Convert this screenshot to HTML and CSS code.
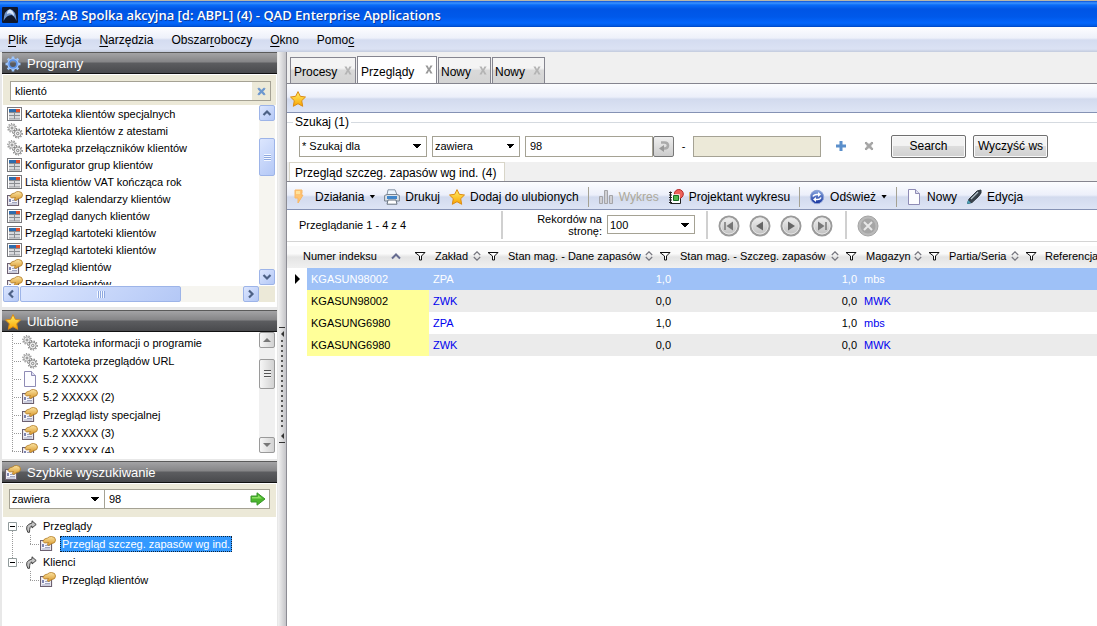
FILE: index.html
```html
<!DOCTYPE html>
<html lang="pl">
<head>
<meta charset="utf-8">
<title>mfg3: AB Spolka akcyjna - QAD Enterprise Applications</title>
<link rel="stylesheet" href="styles.css">
</head>
<body>
<svg class="sprite" aria-hidden="true">
  <defs>
    <linearGradient id="gold" x1="0" y1="0" x2="0" y2="1"><stop offset="0" stop-color="#fff06a"/><stop offset="1" stop-color="#f9a400"/></linearGradient>
    <linearGradient id="brass" x1="0" y1="0" x2="0" y2="1"><stop offset="0" stop-color="#fbe3a0"/><stop offset="1" stop-color="#d8962a"/></linearGradient>
    <linearGradient id="ball" x1="0" y1="0" x2="0" y2="1"><stop offset="0" stop-color="#f2f2f2"/><stop offset="1" stop-color="#bdbdbd"/></linearGradient>
    <linearGradient id="blueball" x1="0" y1="0" x2="0" y2="1"><stop offset="0" stop-color="#8ba9e0"/><stop offset="1" stop-color="#12309c"/></linearGradient>
  </defs>
  <symbol id="form" viewBox="0 0 16 16"><rect x=".5" y="1.5" width="14" height="13" fill="#fff" stroke="#77787c"/><rect x="2" y="3" width="7" height="3" fill="#2f6cac"/><rect x="9" y="3" width="4" height="3" fill="#e2502c"/><path d="M2 7h5v2H2zM8 7h5v2H8zM2 10h5v3H2zM8 10h5v3H8z" fill="#d9dadd"/><path d="M2 6.500h11M2 9.500h11M2 13h11M7.500 6v7" stroke="#8a8d92"/></symbol>
  <symbol id="gears" viewBox="0 0 16 16"><g fill="none" stroke="#7c7c7c"><circle cx="5" cy="5" r="4.200" stroke-width="1.200" stroke-dasharray="1.200 1.400"/><circle cx="5" cy="5" r="3.200" stroke="#999" stroke-width=".9" fill="#eee"/><circle cx="5" cy="5" r="1" stroke-width=".9"/><circle cx="10.700" cy="10.500" r="4.500" stroke-width="1.200" stroke-dasharray="1.300 1.400"/><circle cx="10.700" cy="10.500" r="3.500" fill="#eee" stroke="#888" stroke-width=".9"/><circle cx="10.700" cy="10.500" r="1.200" stroke-width=".9"/></g></symbol>
  <symbol id="browse" viewBox="0 0 16 16"><path d="M.5 4.500h11v10H.5z" fill="#f6f5fb" stroke="#6c6070" stroke-width="1.200"/><path d="M5 9.500h5M5 11.500h5M2 13h8" stroke="#a0a5c0"/><path d="M2 8h2v3H2z" fill="#7f86b0"/><path d="M3 5.500 4.500 3 7.500 2q2-1.800 4-1.500 4 .2 4 3.500T12 7.500L8.500 9.500 7.200 8.500 8.500 6.500 4.500 7z" fill="url(#brass)" stroke="#b07a22" stroke-width=".8" stroke-linejoin="round"/></symbol>
  <symbol id="page" viewBox="0 0 16 16"><path d="M2.500.5h7l4 4v11h-11z" fill="#fcfcff" stroke="#8e8bb5"/><path d="M9.500.5v4h4" fill="#dcdcf0" stroke="#8e8bb5"/></symbol>
  <symbol id="star" viewBox="0 0 16 16"><path d="M8 .6l2.300 4.700 5.200.7-3.800 3.700 1 5.600L8 12.700l-4.700 2.600 1-5.600L.5 6l5.200-.7z" fill="url(#gold)" stroke="#dc8b14" stroke-linejoin="round"/></symbol>
  <symbol id="gear" viewBox="0 0 16 16"><path d="M8 .5v3M8 12.500v3M.5 8h3M12.500 8h3M2.700 2.700l2 2M11.300 11.300l2 2M13.300 2.700l-2 2M4.700 11.300l-2 2" stroke="#9cc4fa" stroke-width="2.600"/><circle cx="8" cy="8" r="4.300" fill="none" stroke="#5c92e6" stroke-width="2.600"/><circle cx="8" cy="8" r="5.300" fill="none" stroke="#b4d4ff" stroke-width=".9"/></symbol>
  <symbol id="arrow" viewBox="0 0 16 14"><path d="M1 4h6V.8L15 7l-8 6.200V10H1z" fill="#4cb72e" stroke="#3a962a"/><path d="M2 5h6V3l4 3.500H2z" fill="#8be063"/></symbol>
  <symbol id="goto" viewBox="0 0 12 13"><path d="M7 .8 11.200 4.500 7 8V6Q4.500 6 4.500 12.300H2.800Q-1 5 7 3z" fill="#c4c4c4" stroke="#333" stroke-width=".9" stroke-linejoin="round"/></symbol>
  <symbol id="tee" viewBox="0 0 10 18"><path d="M.5 0v18M2 9.500h8" stroke="#999" stroke-dasharray="1 1"/></symbol>
  <symbol id="elbow" viewBox="0 0 10 18"><path d="M.5 0v9M0 9.500h10" stroke="#999" stroke-dasharray="1 1" fill="none"/></symbol>
  <symbol id="minus" viewBox="0 0 16 18"><path d="M4.500 14v4M10 9.500h6" stroke="#999" stroke-dasharray="1 1"/><path d="M.5 5.500h8v8h-8z" fill="#fff" stroke="#919b9c"/><path d="M2 9.500h5" stroke="#000"/></symbol>
  <symbol id="minusend" viewBox="0 0 16 18"><path d="M4.500 0v5M10 9.500h6" stroke="#999" stroke-dasharray="1 1"/><path d="M.5 5.500h8v8h-8z" fill="#fff" stroke="#919b9c"/><path d="M2 9.500h5" stroke="#000"/></symbol>
  <symbol id="funnel" viewBox="0 0 12 10"><path d="M1 1.500h10L7.500 5v4h-2V5z" fill="#fff" stroke="#111"/></symbol>
  <symbol id="sort" viewBox="0 0 8 10"><path d="M.8 4L4 .8 7.200 4M.8 6L4 9.200 7.200 6" fill="none" stroke="#77777f" stroke-width="1.200"/></symbol>
  <symbol id="sorted" viewBox="0 0 10 7"><path d="M1 5.500l4-4 4 4" fill="none" stroke="#666c90" stroke-width="2"/></symbol>
  <symbol id="bolt" viewBox="0 0 12 16"><path d="M2 1h7v3l-1 2h2L5 14V9H2z" fill="#ffc473" stroke="#f8b766"/><path d="M3 2h4v3H3z" fill="#ffe29c"/></symbol>
  <symbol id="printer" viewBox="0 0 16 16"><path d="M4 .8h7l2 5H3z" fill="#eaf4fd" stroke="#8794a5"/><path d="M.6 6.500l2.400-1h10l2.400 1V12H.6z" fill="#dce3ea" stroke="#78828f"/><path d="M3 7h10v3H3z" fill="#3f86cb"/><path d="M4 11h8l1 4.200H3z" fill="#fff" stroke="#66717e"/></symbol>
  <symbol id="chart" viewBox="0 0 16 16"><path d="M1.500 7.500h3v7h-3zM6.500 1.500h3v13h-3zM11.500 6.500h3v8h-3z" fill="#d0d0d4" stroke="#a4a4a8"/></symbol>
  <symbol id="designer" viewBox="0 0 16 16"><path d="M2.500 2.500v12h10V8" fill="#fff" stroke="#222"/><path d="M1 3.500h3M1 6h3M1 8.500h3M1 11h3M1 13.500h3" stroke="#222"/><circle cx="10.800" cy="5" r="4.500" fill="#ee625a" stroke="#b52a2a"/><path d="M5.500 6.500h5v5h-5z" fill="#53b84d" stroke="#fff" stroke-width="2.500"/><path d="M5.500 6.500h5v5h-5z" fill="#53b84d" stroke="#176b22"/></symbol>
  <symbol id="refresh" viewBox="0 0 16 16"><circle cx="8" cy="8" r="6.700" fill="url(#blueball)" stroke="#8ea3d6"/><path d="M4 7.500Q5 5 9 5.500M12 8.500Q11 11 7 10.500" fill="none" stroke="#fff" stroke-width="1.500"/><path d="M9 3l3 2.500L9 8zM7 8l-3 2.500L7 13z" fill="#fff"/></symbol>
  <symbol id="pen" viewBox="0 0 16 16"><path d="M1.500 14.500l1.500-4.500 8-8 4-1v3L12.500 7.500 6 13.500z" fill="#39434d" stroke="#2b343c" stroke-linejoin="round"/><path d="M1 15l1-4 3 3z" fill="#49a3bb"/><path d="M5 10l7-7" stroke="#b4c2ca" stroke-width="1.300"/></symbol>
  <symbol id="disc" viewBox="0 0 22 22"><circle cx="11" cy="11" r="9.500" fill="url(#ball)" stroke="#9a9a9a" stroke-width="2"/><circle cx="11" cy="11" r="8" fill="none" stroke="#e4e4e4"/></symbol>
  <symbol id="undo" viewBox="0 0 12 12"><path d="M3 2.500h3.500q3.500 0 3.500 3T6.500 8.500H5" fill="none" stroke="#aaa" stroke-width="2.600"/><path d="M6 5v7L1 8.500z" fill="#999"/></symbol>
  <symbol id="cross" viewBox="0 0 10 10"><path d="M2 1l3 2.500L8 1l1 1-2.500 3L9 8 8 9 5 6.500 2 9 1 8l2.500-3L1 2z" fill="currentColor" stroke="currentColor"/></symbol>
  <symbol id="close" viewBox="0 0 10 10"><path d="M1 .5h2.500L5 3.500l1.500-3H9L6.300 5 9 9.500H6.500L5 6.500l-1.500 3H1L3.700 5z" fill="currentColor"/></symbol>
  <symbol id="plus" viewBox="0 0 10 10"><path d="M5 0v10M0 5h10" stroke="#5b8fcb" stroke-width="3"/></symbol>
  <symbol id="chev" viewBox="0 0 10 8"><path d="M1.500 6L5 2.500 8.500 6" fill="none" stroke="#4d6185" stroke-width="2.200"/></symbol>
</svg>

<div class="window">
<header class="titlebar">
  <svg class="logo" viewBox="0 0 16 16"><rect width="16" height="16" rx="1" fill="#10182c"/><path d="M1.500 14Q2 3 8 2q6 1 6.500 12-2-5-5-6-5 0-8 6z" fill="#6f94cc"/><path d="M5 7q0-4 3-4.500Q12 4 12 9 9 5 5 7z" fill="#dbe8fb"/></svg>
  <h1>mfg3: AB Spolka akcyjna [d: ABPL] (4) - QAD Enterprise Applications</h1>
</header>
<nav class="menubar">
  <button><u>P</u>lik</button><button><u>E</u>dycja</button><button><u>N</u>arzędzia</button><button>Obszar<u>r</u>oboczy</button><button><u>O</u>kno</button><button>Pomo<u>c</u></button>
</nav>
<div class="body">
<aside class="side">
  <section class="panel programs">
    <h2><svg class="i16"><use href="#gear"/></svg>Programy</h2>
    <div class="find"><div class="field"><input aria-label="Szukaj programu" value="klientó"><button class="clear" aria-label="Wyczyść"><svg><use href="#cross"/></svg></button></div></div>
    <div class="scroller">
      <ul class="list">
        <li><svg class="i16"><use href="#form"/></svg>Kartoteka klientów specjalnych</li>
        <li><svg class="i16"><use href="#gears"/></svg>Kartoteka klientów z atestami</li>
        <li><svg class="i16"><use href="#gears"/></svg>Kartoteka przełączników klientów</li>
        <li><svg class="i16"><use href="#form"/></svg>Konfigurator grup klientów</li>
        <li><svg class="i16"><use href="#form"/></svg>Lista klientów VAT kończąca rok</li>
        <li><svg class="i16"><use href="#browse"/></svg>Przegląd&nbsp; kalendarzy klientów</li>
        <li><svg class="i16"><use href="#form"/></svg>Przegląd danych klientów</li>
        <li><svg class="i16"><use href="#form"/></svg>Przegląd kartoteki klientów</li>
        <li><svg class="i16"><use href="#form"/></svg>Przegląd kartoteki klientów</li>
        <li><svg class="i16"><use href="#browse"/></svg>Przegląd klientów</li>
        <li><svg class="i16"><use href="#browse"/></svg>Przegląd klientów</li>
      </ul>
      <div class="bar vertical blue"><button aria-label="W górę"><svg><use href="#chev"/></svg></button><span class="track before"></span><span class="thumb"></span><span class="track"></span><button aria-label="W dół"><svg class="down"><use href="#chev"/></svg></button></div>
    </div>
    <div class="hrow">
      <div class="bar horizontal blue"><button aria-label="W lewo"><svg class="left"><use href="#chev"/></svg></button><span class="track before"></span><span class="thumb"></span><span class="track"></span><button aria-label="W prawo"><svg class="right"><use href="#chev"/></svg></button></div>
      <span class="corner"></span>
    </div>
  </section>
  <section class="panel favorites">
    <h2><svg class="i16"><use href="#star"/></svg>Ulubione</h2>
    <div class="scroller">
      <ul class="tree inset">
        <li><svg class="branch"><use href="#tee"/></svg><svg class="i16"><use href="#gears"/></svg><span>Kartoteka informacji o programie</span></li>
        <li><svg class="branch"><use href="#tee"/></svg><svg class="i16"><use href="#gears"/></svg><span>Kartoteka przeglądów URL</span></li>
        <li><svg class="branch"><use href="#tee"/></svg><svg class="i16"><use href="#page"/></svg><span>5.2 XXXXX</span></li>
        <li><svg class="branch"><use href="#tee"/></svg><svg class="i16"><use href="#browse"/></svg><span>5.2 XXXXX (2)</span></li>
        <li><svg class="branch"><use href="#tee"/></svg><svg class="i16"><use href="#browse"/></svg><span>Przegląd listy specjalnej</span></li>
        <li><svg class="branch"><use href="#tee"/></svg><svg class="i16"><use href="#browse"/></svg><span>5.2 XXXXX (3)</span></li>
        <li><svg class="branch"><use href="#elbow"/></svg><svg class="i16"><use href="#browse"/></svg><span>5.2 XXXXX (4)</span></li>
      </ul>
      <div class="bar vertical gray"><button aria-label="W górę"><i class="up"></i></button><span class="track before"></span><span class="thumb"></span><span class="track"></span><button aria-label="W dół"><i class="dn"></i></button></div>
    </div>
  </section>
  <section class="panel quick">
    <h2><svg class="i16"><use href="#browse"/></svg>Szybkie wyszukiwanie</h2>
    <div class="find"><select aria-label="Warunek"><option>zawiera</option></select><div class="field"><input aria-label="Wartość" value="98"><button class="go" aria-label="Szukaj"><svg><use href="#arrow"/></svg></button></div></div>
    <ul class="tree">
      <li><svg class="branch"><use href="#minus"/></svg><svg class="goto"><use href="#goto"/></svg><span>Przeglądy</span></li>
      <li class="child line"><svg class="branch"><use href="#elbow"/></svg><svg class="i16"><use href="#browse"/></svg><span class="selected">Przegląd szczeg. zapasów wg ind.</span></li>
      <li><svg class="branch"><use href="#minusend"/></svg><svg class="goto"><use href="#goto"/></svg><span>Klienci</span></li>
      <li class="child"><svg class="branch"><use href="#elbow"/></svg><svg class="i16"><use href="#browse"/></svg><span>Przegląd klientów</span></li>
    </ul>
  </section>
</aside>
<div class="splitter"><i></i><b></b><span></span><b></b><i></i></div>
<main class="main">
  <div class="tabs" role="tablist">
    <button role="tab">Procesy <svg><use href="#close"/></svg></button>
    <button role="tab" class="active">Przeglądy <svg><use href="#close"/></svg></button>
    <button role="tab">Nowy <svg><use href="#close"/></svg></button>
    <button role="tab">Nowy <svg><use href="#close"/></svg></button>
  </div>
  <div class="favbar"><button aria-label="Ulubione"><svg class="i16"><use href="#star"/></svg></button></div>
  <section class="search">
    <h3>Szukaj (1)</h3>
    <div class="criteria">
      <select class="wide" aria-label="Pole"><option>* Szukaj dla</option></select>
      <select class="mid" aria-label="Operator"><option>zawiera</option></select>
      <div class="lookup"><input aria-label="Od" value="98"><button aria-label="Wybierz"><svg><use href="#undo"/></svg></button></div>
      <span>-</span>
      <input class="wide off" aria-label="Do" disabled>
      <button class="plain add" aria-label="Dodaj"><svg><use href="#plus"/></svg></button>
      <button class="plain remove" aria-label="Usuń"><svg><use href="#cross"/></svg></button>
      <button class="push">Search</button>
      <button class="push">Wyczyść ws</button>
    </div>
  </section>
  <div class="subtabs"><button role="tab">Przegląd szczeg. zapasów wg ind. (4)</button></div>
  <div class="toolbar">
    <button class="actions"><svg class="i16"><use href="#bolt"/></svg>Działania<i class="drop"></i></button>
    <button><svg class="i16"><use href="#printer"/></svg>Drukuj</button>
    <button><svg class="i16"><use href="#star"/></svg>Dodaj do ulubionych</button>
    <hr>
    <button disabled><svg class="i16"><use href="#chart"/></svg>Wykres</button>
    <button><svg class="i16"><use href="#designer"/></svg>Projektant wykresu</button>
    <hr>
    <button class="reload"><svg class="i16"><use href="#refresh"/></svg>Odśwież<i class="drop"></i></button>
    <hr>
    <button><svg class="i16"><use href="#page"/></svg>Nowy</button>
    <button><svg class="i16"><use href="#pen"/></svg>Edycja</button>
  </div>
  <div class="paging">
    <p>Przeglądanie 1 - 4 z 4</p>
    <hr>
    <label for="rows">Rekordów na stronę:</label>
    <select id="rows"><option>100</option></select>
    <hr>
    <div class="pager">
      <button aria-label="Pierwsza"><svg viewBox="0 0 22 22"><use href="#disc"/><path d="M7 7v8" stroke="#777" stroke-width="1.500"/><path d="M15 6.500v9L8.500 11z" fill="#777"/></svg></button>
      <button aria-label="Poprzednia"><svg viewBox="0 0 22 22"><use href="#disc"/><path d="M14 6.500v9L7 11z" fill="#666"/></svg></button>
      <button aria-label="Następna"><svg viewBox="0 0 22 22"><use href="#disc"/><path d="M8 6.500v9l7-4.500z" fill="#666"/></svg></button>
      <button aria-label="Ostatnia"><svg viewBox="0 0 22 22"><use href="#disc"/><path d="M15 7v8" stroke="#777" stroke-width="1.500"/><path d="M7 6.500v9l6.500-4.500z" fill="#777"/></svg></button>
    </div>
    <hr>
    <button class="stop" aria-label="Zatrzymaj"><svg viewBox="0 0 22 22"><circle cx="11" cy="11" r="10" fill="#b9b9b9" stroke="#a4a4a4"/><circle cx="11" cy="11" r="7.500" fill="#a6a6a6"/><path d="M7 7l8 8M15 7l-8 8" stroke="#e8e8e8" stroke-width="2"/></svg></button>
  </div>
  <table class="grid">
    <colgroup><col class="c0"><col class="c1"><col class="c2"><col class="c3"><col class="c4"><col class="c5"><col class="c6"><col></colgroup>
    <thead><tr>
      <th colspan="2" class="first"><div>Numer indeksu<svg class="sorted"><use href="#sorted"/></svg><svg class="funnel"><use href="#funnel"/></svg></div></th>
      <th><div>Zakład<svg class="sort"><use href="#sort"/></svg><svg class="funnel"><use href="#funnel"/></svg></div></th>
      <th><div>Stan mag. - Dane zapasów<svg class="sort"><use href="#sort"/></svg><svg class="funnel"><use href="#funnel"/></svg></div></th>
      <th><div>Stan mag. - Szczeg. zapasów<svg class="sort"><use href="#sort"/></svg><svg class="funnel"><use href="#funnel"/></svg></div></th>
      <th><div>Magazyn<svg class="sort"><use href="#sort"/></svg><svg class="funnel"><use href="#funnel"/></svg></div></th>
      <th><div>Partia/Seria<svg class="sort"><use href="#sort"/></svg><svg class="funnel"><use href="#funnel"/></svg></div></th>
      <th class="last"><div>Referencja</div></th>
    </tr></thead>
    <tbody>
      <tr class="current"><td class="mark"><i></i></td><td class="key">KGASUN98002</td><td class="link">ZPA</td><td class="num">1,0</td><td class="num">1,0</td><td class="link">mbs</td><td></td><td></td></tr>
      <tr class="alt"><td class="mark"></td><td class="key">KGASUN98002</td><td class="link">ZWK</td><td class="num">0,0</td><td class="num">0,0</td><td class="link">MWK</td><td></td><td></td></tr>
      <tr><td class="mark"></td><td class="key">KGASUNG6980</td><td class="link">ZPA</td><td class="num">1,0</td><td class="num">1,0</td><td class="link">mbs</td><td></td><td></td></tr>
      <tr class="alt"><td class="mark"></td><td class="key">KGASUNG6980</td><td class="link">ZWK</td><td class="num">0,0</td><td class="num">0,0</td><td class="link">MWK</td><td></td><td></td></tr>
    </tbody>
  </table>
</main>
</div>
</div>
</body>
</html>
```
FILE: styles.css
```css
* { box-sizing: border-box; }
body, h1, h2, h3, p, ul { margin: 0; padding: 0; }
body { font: 11px/14px "Liberation Sans", Arial, sans-serif; color: #000; background: #fff; overflow: hidden; }
button, input, select { font: inherit; color: inherit; margin: 0; padding: 0; border: 0; border-radius: 0; background: none; }
button { display: flex; align-items: center; justify-content: center; white-space: nowrap; }
svg { display: block; flex: none; }
ul { list-style: none; }
hr { margin: 0; border: 0; flex: none; }
u { text-underline-offset: 2px; }
.sprite { position: absolute; width: 0; height: 0; }
.i16 { width: 16px; height: 16px; }

.window { height: 100vh; display: flex; flex-direction: column; }
.titlebar { height: 27px; flex: none; display: flex; align-items: center; gap: 4px; padding: 1px 2px 0; border-top: 1px solid #b9b6a8; color: #fff;
  background: linear-gradient(#0a50d8 0, #3a93ff 2px, #0a6cf8 4px, #0055e5 8px, #0059ea 16px, #0466fc 22px, #0058e0 25px, #0040b8 26px); }
.titlebar .logo { width: 16px; height: 16px; }
.titlebar h1 { font: 600 13px/16px "Open Sans", "Noto Sans", sans-serif; white-space: nowrap; text-shadow: 1px 1px #0a3a9c; }
.menubar { height: 25px; flex: none; display: flex; gap: 18px; padding: 1px 8px 0; font-size: 12px;
  background: linear-gradient(#fdfdff 0, #eef1fa 11px, #d4dcf0 13px, #dbe2f4 22px, #c3cbdd 25px); }
.body { flex: 1; min-height: 0; display: flex; }

.side { width: 278px; flex: none; display: flex; flex-direction: column; padding: 0 1px 0 2px; background: #e8e8e8; }
.panel { background: #fff; display: flex; flex-direction: column; flex: none; }
.panel h2 { height: 22px; flex: none; display: flex; align-items: center; gap: 6px; padding: 2px 3px 0; color: #fff; font-size: 13px; font-weight: normal; border-top: 1px solid #5a5a5a; border-bottom: 1px solid #111;
  background: linear-gradient(#a3a3a5 0, #858587 9px, #5c5d60 10px, #47484b 21px); }
.programs { height: 255px; margin-bottom: 3px; }
.favorites { height: 149px; margin-bottom: 2px; }
.quick { flex: 1; }
.find { display: flex; margin: 1px 1px 0; padding: 6px 5px 4px 7px; background: #ece9d8; }
.quick .find { padding: 5px 6px 8px; }
.field { flex: 1; min-width: 0; height: 20px; display: flex; border: 1px solid #a5a294; background: #fff; }
.field input { flex: 1; min-width: 0; padding: 0 4px; }
.quick .field { border-left: 0; }
.clear { width: 18px; background: #ece9d8; color: #6c97cf; }
.clear svg { width: 9px; height: 9px; }
.go { width: 22px; }
.go svg { width: 16px; height: 14px; }
select { appearance: none; height: 21px; padding: 0 18px 0 2px; border: 1px solid #a5a294;
  background: #fff conic-gradient(from -45deg at 50% 100%, #000 90deg, transparent 0) no-repeat right 5px center / 8px 4px; }
.quick select { width: 96px; height: 20px; }

.scroller { flex: 1; min-height: 0; display: flex; overflow: hidden; }
.list { flex: 1; min-width: 0; padding-left: 5px; overflow: hidden; }
.list li { display: flex; align-items: center; gap: 2px; height: 17px; white-space: nowrap; }
.programs .scroller { margin: 0 2px 0 0; }
.bar { display: flex; flex: none; }
.bar button { flex: none; width: 16px; height: 16px; }
.bar .track { flex: 1; }
.vertical { flex-direction: column; width: 16px; }
.horizontal { flex: 1; height: 16px; }
.blue { background: #f6f5f0; }
.blue button, .blue .thumb { border: 1px solid #9db4e8; border-radius: 2px; background: linear-gradient(135deg, #dce6fe, #b4c8f6); }
.blue svg { width: 10px; height: 8px; }
.down { transform: rotate(180deg); }
.left { transform: rotate(-90deg); }
.right { transform: rotate(90deg); }
.vertical.blue .before { flex: 0 0 17px; }
.vertical .thumb { display: grid; place-items: center; height: 38px; }
.vertical .thumb::before { content: ""; width: 7px; height: 7px; background: repeating-linear-gradient(#f4f8ff 0 1px, #8ea8e0 1px 2px); }
.horizontal .before { flex: 0 0 1px; }
.horizontal .thumb { display: grid; place-items: center; width: 161px; }
.horizontal .thumb::before { content: ""; width: 8px; height: 7px; background: repeating-linear-gradient(90deg, #f4f8ff 0 1px, #8ea8e0 1px 2px); }
.hrow { display: flex; height: 16px; flex: none; margin: 1px 2px 5px 1px; }
.corner { width: 16px; background: #ece9d8; }

.favorites .scroller { margin: 0 2px 6px 0; }
.gray { background: #f0f0f0; }
.gray button, .gray .thumb { border: 1px solid #9a9a9a; border-radius: 2px; background: linear-gradient(90deg, #f6f6f6, #d2d2d2); }
.gray i { width: 8px; height: 4px; background: #777; clip-path: polygon(0 0, 100% 0, 50% 100%); }
.gray .up { clip-path: polygon(0 100%, 100% 100%, 50% 0); }
.gray .before { flex: 0 0 11px; }
.gray .thumb { height: 30px; }
.gray .thumb::before { height: 8px; background: repeating-linear-gradient(#555 0 1px, #f0f0f0 1px 3px); }
.tree { flex: 1; min-width: 0; padding-left: 6px; overflow: hidden; }
.tree.inset { padding: 2px 0 0 10px; }
.tree li { display: flex; align-items: center; height: 18px; white-space: nowrap; }
.branch { width: 16px; height: 18px; }
.inset .branch, .child .branch { width: 10px; }
.tree li > span { margin-left: 3px; padding: 0 2px; }
.goto { width: 12px; height: 13px; margin: 0 1px; }
.child { padding-left: 22px; }
.line { background: repeating-linear-gradient(#999 0 1px, transparent 1px 2px) no-repeat 4px 0 / 1px 100%; }
.tree .selected { margin-left: 4px; padding: 0 1px; height: 16px; line-height: 14px; color: #fff; background: #3399ff; border: 1px dotted #123; }
.child span:not(.selected) { margin-left: 4px; }

.splitter { width: 9px; flex: none; display: flex; flex-direction: column; align-items: center; gap: 3px; padding-top: 275px; border-right: 1px solid #8c8c94; background: linear-gradient(90deg, #f2f2f2, #c4c4c8); }
.splitter i { width: 6px; height: 1px; background: #333; }
.splitter b { border: solid transparent; border-width: 3px 3px 3px 0; border-right-color: #333; }
.splitter span { width: 2px; height: 90px; background: repeating-linear-gradient(#555 0 2px, transparent 2px 5px); }

.main { flex: 1; min-width: 0; display: flex; flex-direction: column; background: #fff; overflow: hidden; }
.tabs { height: 32px; flex: none; display: flex; align-items: flex-end; gap: 1px; padding-left: 3px; background: #f0f0f0; border-bottom: 1px solid #85858f; font-size: 12px; }
.tabs button { height: 26px; min-width: 53px; justify-content: space-between; gap: 5px; padding: 3px 2px 0; border: 1px solid #85858f; border-bottom: 0; background: linear-gradient(#f4f4f4 0 40%, #d9d9d9 50%, #d4d4d4); }
.tabs button:first-child { min-width: 66px; padding-left: 3px; }
.tabs .active { height: 27px; min-width: 80px; padding-left: 3px; background: #fff; }
.tabs svg { width: 10px; height: 9px; margin-bottom: 4px; color: #b4b4b4; }
.tabs .active svg { color: #999; }
.favbar { height: 29px; flex: none; display: flex; padding: 2px 0 0 3px; border-bottom: 1px solid #8592b4; background: linear-gradient(#fcfdff, #eceffa 13px, #d2daee 15px, #dee5f5 28px); }
.search { height: 49px; flex: none; }
.search h3 { display: flex; align-items: center; gap: 2px; font: inherit; font-size: 12px; padding-top: 2px; }
.search h3::before, .search h3::after { content: ""; height: 1px; background: #d5dae0; width: 6px; }
.search h3::after { flex: 1; }
.criteria { display: flex; align-items: center; height: 24px; margin-top: 5px; padding-left: 12px; }
.criteria > * { flex: none; }
.wide { width: 128px; }
.criteria .mid { width: 88px; margin: 0 5px; }
.criteria input { height: 21px; border: 1px solid #a5a294; padding: 0 4px; }
.criteria .off { background: #ece9d8; }
.lookup { display: flex; }
.lookup input { width: 128px; }
.lookup button { width: 21px; height: 21px; border: 1px solid #777; border-radius: 2px; background: linear-gradient(#eee, #ccc); }
.lookup svg { width: 12px; height: 12px; }
.criteria > span { width: 19px; text-align: center; }
.plain { width: 28px; }
.criteria .add { margin-left: 6px; }
.plain svg { width: 10px; height: 10px; }
.remove { color: #a5a5a5; margin-right: 8px; }
.push { width: 75px; height: 23px; border: 1px solid #707070; border-radius: 2px; font-size: 12px; background: linear-gradient(#f3f3f3 0 45%, #ddd 50%, #d0d0d0); box-shadow: inset 0 0 0 1px #fafafa; margin-right: 7px; }
.subtabs { height: 19px; flex: none; padding-left: 2px; background: #f0f0f0; }
.subtabs button { height: 19px; padding: 1px 8px 0 5px; font-size: 12px; background: #fff; border: 1px solid #d8d5c8; border-bottom: 0; }
.toolbar { height: 29px; flex: none; display: flex; align-items: center; gap: 9px; padding: 2px 0 0 6px; font-size: 12px; border-top: 1px solid #85858f; border-bottom: 1px solid #8592b4; background: linear-gradient(#fcfdff, #eceffa 13px, #d2daee 15px, #dee5f5 28px); }
.toolbar button { gap: 5px; flex: none; }
.toolbar button:disabled { color: #aca899; }
.toolbar hr { width: 1px; height: 20px; background: #a5a294; }
.toolbar .actions .i16 { width: 12px; margin-right: 5px; }
.drop { width: 6px; height: 4px; background: #000; clip-path: polygon(0 0, 100% 0, 50% 100%); }
.paging { height: 32px; flex: none; display: flex; align-items: center; padding-bottom: 2px; border-bottom: 1px solid #d4d4d4; }
.paging > * { flex: none; }
.paging p { width: 214px; padding-left: 12px; }
.paging hr { width: 2px; height: 28px; background: #d0d0d0; }
.paging label { width: 99px; padding-left: 25px; line-height: 12px; text-align: right; margin-right: 5px; }
.paging select { width: 88px; margin-right: 11px; height: 19px; }
.pager { display: flex; gap: 9px; margin: 0 12px 0 10px; }
.pager svg, .stop svg { width: 22px; height: 22px; }
.pager, .stop { padding-top: 3px; }
.stop { margin-left: 10px; }

.grid { table-layout: fixed; width: 100%; border-collapse: collapse; margin-top: 4px; }
.c0 { width: 20px; } .c1 { width: 122px; } .c2 { width: 73px; } .c3 { width: 172px; } .c4 { width: 186px; } .c5 { width: 83px; } .c6 { width: 97px; }
.grid th { height: 22px; padding: 0 3px 2px 6px; font-weight: normal; text-align: left; overflow: hidden; white-space: nowrap; background: linear-gradient(#fafafa 0 35%, #e4e4e4 50%, #f0f0f0); }
.grid th.first { padding-left: 16px; }
.grid th.last { padding-left: 5px; }
.grid th div { display: flex; align-items: center; }
.funnel { width: 12px; height: 10px; margin-left: 6px; }
.sort { width: 8px; height: 10px; margin-left: auto; }
.sorted { width: 10px; height: 7px; margin: 0 7px 0 auto; }
.grid td { height: 22px; padding: 0 3px 0 4px; }
.grid .alt td { background: #ebebeb; }
.grid .key, .grid .alt .key { background: #ffff99; }
.grid .link { color: #0000ee; }
.grid .num { text-align: right; }
.grid .current td { background: #9ec1f7; color: #fff; }
.grid .current .mark, .grid .alt .mark { background: #fff; }
.mark i { display: block; margin-left: 4px; border: solid transparent; border-width: 5px 0 5px 5px; border-left-color: #000; width: 0; }
```
